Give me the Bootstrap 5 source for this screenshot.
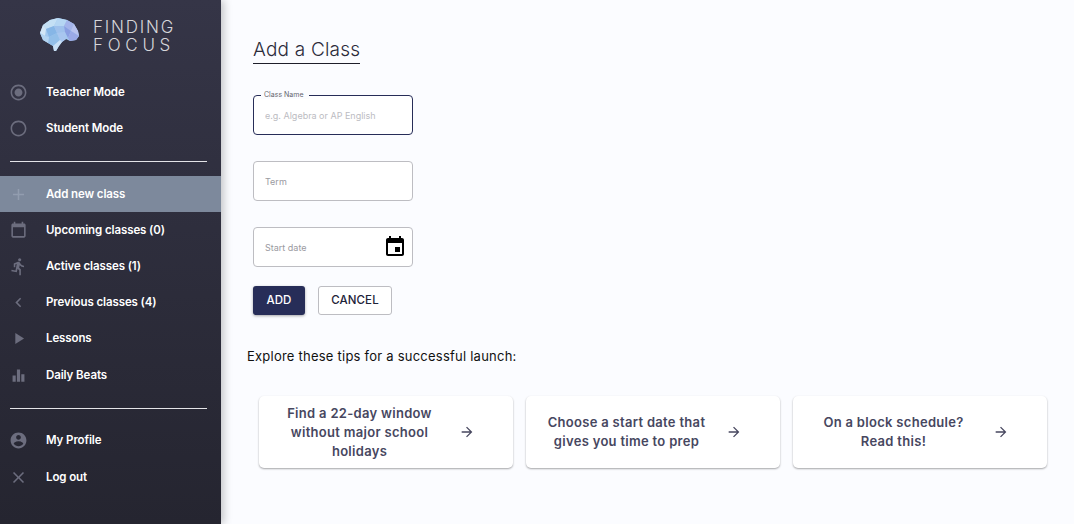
<!DOCTYPE html>
<html lang="en">
<head>
  <meta charset="UTF-8">
  <title>Finding Focus - Add a Class</title>
  <link href="https://cdn.jsdelivr.net/npm/bootstrap@5.3.2/dist/css/bootstrap.min.css" rel="stylesheet">
  <style>
    body {
      background-color: #fbfcff;
      font-family: Inter, "Liberation Sans", sans-serif;
      color: #111;
      height: 100vh;
      overflow: hidden;
    }

    .side-bar {
      width: 221px;
      height: 100vh;
      flex-shrink: 0;
      background: linear-gradient(180deg, #353547 0%, #252530 100%);
      box-shadow: 3px 0 8px rgba(0, 0, 0, .22);
    }

    .logo-area {
      height: 74px;
      padding: 18px 0 0 40px;
      gap: 14px;
    }

    .logo-text {
      color: #d6d6da;
      font-size: 17px;
      font-weight: 300;
      line-height: 18px;
    }

    .logo-top {
      display: block;
      letter-spacing: 1.8px;
    }

    .logo-bottom {
      display: block;
      letter-spacing: 4.7px;
    }

    .side-item {
      height: 36px;
      color: #fff;
      font-size: 11.5px;
      font-weight: 600;
      letter-spacing: -.1px;
      text-decoration: none;
      padding-left: 9px;
    }

    .side-item span {
      padding-top: 2px;
    }

    .side-item svg {
      width: 19px;
      height: 19px;
      fill: #6c6d7e;
      margin-right: 18px;
      flex-shrink: 0;
    }

    .side-item.is-active {
      background-color: #7d899c;
    }

    .side-item.is-active svg {
      fill: #929daf;
    }

    .side-item.is-late {
      margin-top: 1px;
    }

    .side-rule {
      border-top: 1px solid #e4e4e8;
      margin: 15px 14px 14px 10px;
    }

    .side-rule.is-tight {
      margin-bottom: 13px;
    }

    .main-area {
      padding: 38px 27px 0 26px;
    }

    .page-title {
      display: inline-block;
      font-size: 19px;
      font-weight: 300;
      line-height: 24px;
      letter-spacing: .2px;
      color: #2b2b3a;
      border-bottom: 1px solid #1e1e2a;
      padding-bottom: 1px;
      margin: 0 0 31px 6px;
    }

    .field-box {
      width: 160px;
      height: 40px;
      margin: 0 0 26px 6px;
    }

    .field-box .form-control {
      height: 40px;
      font-size: 9px;
      padding: 0 11px;
      border: 1px solid #bdbdc2;
      border-radius: 4px;
      background-color: #fff;
      box-shadow: none;
    }

    .field-box .form-control::placeholder {
      color: #9a9a9f;
    }

    .field-box.is-focus .form-control {
      border-color: #272d58;
    }

    .field-box.is-focus .form-control::placeholder {
      color: #bcbcc2;
    }

    .field-label {
      position: absolute;
      left: 8px;
      top: -5px;
      padding: 0 5px 0 3px;
      font-size: 7px;
      line-height: 9px;
      color: #66666e;
      background-color: #fbfcff;
    }

    .cal-icon {
      position: absolute;
      right: 6px;
      top: 8px;
      width: 24px;
      height: 24px;
    }

    .btn-row {
      margin: -7px 0 0 6px;
      gap: 13px;
    }

    .btn-add, .btn-cancel {
      height: 29px;
      font-size: 11.5px;
      font-weight: 500;
      letter-spacing: .1px;
      border-radius: 3px;
      padding: 0;
    }

    .btn-add {
      width: 52px;
      background-color: #272d58;
      border: 0;
      color: #fff;
      box-shadow: 0 1px 3px rgba(0, 0, 0, .35);
    }

    .btn-cancel {
      width: 74px;
      background-color: #fff;
      border: 1px solid #bdbdc2;
      color: #1e2238;
    }

    .tips-intro {
      font-size: 13px;
      line-height: 18px;
      letter-spacing: .23px;
      margin: 32px 0 31px;
      color: #111;
    }

    .tips-row {
      margin-left: 12px;
      gap: 13px;
    }

    .tip-box {
      flex: 1 1 0;
      height: 72px;
      background-color: #fff;
      border: 0;
      border-radius: 5px;
      box-shadow: 0 1px 2px rgba(0, 0, 0, .35);
      color: #47475f;
      font-size: 13px;
      font-weight: 600;
      line-height: 19px;
      letter-spacing: .3px;
      text-align: center;
      padding: 0 38px 0 15px;
      gap: 14px;
    }

    .tip-box span {
      flex: 1 1 0;
    }

    .tip-box svg {
      width: 16px;
      height: 16px;
      fill: #47475f;
      flex-shrink: 0;
    }
  </style>
</head>
<body>
  <div class="d-flex">
    <!-- sidebar -->
    <nav class="side-bar d-flex flex-column">
      <div class="logo-area d-flex">
        <svg width="39" height="34" viewBox="0 0 39 34" class="flex-shrink-0">
          <polygon points="0,15 3,7 10,2 18,0 27,2 34,6 38,13 39,18 36,22 30,23 26,21 22,24 19,28 16,33 14,33 13,28 8,25 3,22" fill="#a3c8ee"/>
          <polygon points="3,7 10,2 18,0 14,8 6,11" fill="#c4e0f5"/>
          <polygon points="18,0 27,2 24,8 14,8" fill="#b5d6f3"/>
          <polygon points="0,15 3,7 6,11 5,18" fill="#d2e6f6"/>
          <polygon points="6,11 14,8 17,15 9,19" fill="#86b6e6"/>
          <polygon points="14,8 24,8 25,14 17,15" fill="#9fc1ec"/>
          <polygon points="27,2 34,6 31,13 24,8" fill="#a4b4ea"/>
          <polygon points="24,8 31,13 28,20 25,14" fill="#8a9fe2"/>
          <polygon points="34,6 38,13 39,18 31,13" fill="#b8c2ee"/>
          <polygon points="31,13 39,18 36,22 30,23 28,20" fill="#9aa9e6"/>
          <polygon points="9,19 17,15 20,22 13,28 8,25" fill="#93bfe9"/>
          <polygon points="17,15 25,14 26,21 22,24 20,22" fill="#a8c6ef"/>
          <polygon points="13,28 20,22 22,24 19,28 16,33 14,33" fill="#c9e0f6"/>
          <polygon points="0,15 5,18 9,19 8,25 3,22" fill="#b3d4f1"/>
        </svg>
        <div class="logo-text"><span class="logo-top">FINDING</span><span class="logo-bottom">FOCUS</span></div>
      </div>

      <a href="#" class="side-item d-flex align-items-center">
        <svg viewBox="0 0 24 24"><path d="M12 7c-2.76 0-5 2.24-5 5s2.24 5 5 5 5-2.24 5-5-2.24-5-5-5zm0-5C6.48 2 2 6.48 2 12s4.48 10 10 10 10-4.48 10-10S17.52 2 12 2zm0 18c-4.42 0-8-3.58-8-8s3.58-8 8-8 8 3.58 8 8-3.58 8-8 8z"/></svg>
        <span>Teacher Mode</span>
      </a>
      <a href="#" class="side-item d-flex align-items-center">
        <svg viewBox="0 0 24 24"><path d="M12 2C6.48 2 2 6.48 2 12s4.48 10 10 10 10-4.48 10-10S17.52 2 12 2zm0 18c-4.42 0-8-3.58-8-8s3.58-8 8-8 8 3.58 8 8-3.58 8-8 8z"/></svg>
        <span>Student Mode</span>
      </a>

      <div class="side-rule"></div>

      <a href="#" class="side-item is-active d-flex align-items-center">
        <svg viewBox="0 0 24 24"><path d="M19 13h-6v6h-2v-6H5v-2h6V5h2v6h6v2z"/></svg>
        <span>Add new class</span>
      </a>
      <a href="#" class="side-item d-flex align-items-center">
        <svg viewBox="0 0 24 24"><path d="M19 3h-1V1h-2v2H8V1H6v2H5c-1.11 0-1.99.9-1.99 2L3 19c0 1.1.89 2 2 2h14c1.1 0 2-.9 2-2V5c0-1.1-.9-2-2-2zm0 16H5V8h14v11z"/></svg>
        <span>Upcoming classes (0)</span>
      </a>
      <a href="#" class="side-item d-flex align-items-center">
        <svg viewBox="0 0 24 24"><path d="M13.49 5.48c1.1 0 2-.9 2-2s-.9-2-2-2-2 .9-2 2 .9 2 2 2zm-3.6 13.9l1-4.4 2.1 2v6h2v-7.5l-2.1-2 .6-3c1.3 1.5 3.3 2.5 5.5 2.5v-2c-1.9 0-3.5-1-4.3-2.4l-1-1.6c-.4-.6-1-1-1.7-1-.3 0-.5.1-.8.1l-5.2 2.2v4.7h2v-3.4l1.8-.7-1.6 8.1-4.9-1-.4 2 7 1.4z"/></svg>
        <span>Active classes (1)</span>
      </a>
      <a href="#" class="side-item d-flex align-items-center">
        <svg viewBox="0 0 24 24"><path d="M15.41 7.41L14 6l-6 6 6 6 1.41-1.41L10.83 12z"/></svg>
        <span>Previous classes (4)</span>
      </a>
      <a href="#" class="side-item d-flex align-items-center">
        <svg viewBox="0 0 24 24"><path d="M8 5v14l11-7z"/></svg>
        <span>Lessons</span>
      </a>
      <a href="#" class="side-item is-late d-flex align-items-center">
        <svg viewBox="0 0 24 24"><path d="M4.5 12h4v8h-4zM10 4.500h4V20h-4zm5.500 6h4V20h-4z"/></svg>
        <span>Daily Beats</span>
      </a>

      <div class="side-rule is-tight"></div>

      <a href="#" class="side-item d-flex align-items-center">
        <svg viewBox="0 0 24 24"><path d="M12 2C6.48 2 2 6.48 2 12s4.48 10 10 10 10-4.48 10-10S17.52 2 12 2zm0 3c1.66 0 3 1.34 3 3s-1.34 3-3 3-3-1.34-3-3 1.34-3 3-3zm0 14.2c-2.5 0-4.71-1.28-6-3.22.03-1.99 4-3.08 6-3.08 1.99 0 5.97 1.09 6 3.08-1.29 1.94-3.5 3.22-6 3.22z"/></svg>
        <span>My Profile</span>
      </a>
      <a href="#" class="side-item is-late d-flex align-items-center">
        <svg viewBox="0 0 24 24"><path d="M19 6.41L17.59 5 12 10.59 6.41 5 5 6.41 10.59 12 5 17.59 6.41 19 12 13.41 17.59 19 19 17.59 13.41 12z"/></svg>
        <span>Log out</span>
      </a>
    </nav>

    <!-- main content -->
    <main class="main-area flex-grow-1">
      <h1 class="page-title">Add a Class</h1>

      <div class="field-box is-focus position-relative">
        <input type="text" class="form-control" placeholder="e.g. Algebra or AP English">
        <span class="field-label">Class Name</span>
      </div>
      <div class="field-box position-relative">
        <input type="text" class="form-control" placeholder="Term">
      </div>
      <div class="field-box position-relative">
        <input type="text" class="form-control" placeholder="Start date">
        <svg class="cal-icon" viewBox="0 0 24 24"><path d="M17 12h-5v5h5v-5zM16 1v2H8V1H6v2H5c-1.11 0-1.99.9-1.99 2L3 19c0 1.1.89 2 2 2h14c1.1 0 2-.9 2-2V5c0-1.1-.9-2-2-2h-1V1h-2zm3 18H5V8h14v11z"/></svg>
      </div>

      <div class="btn-row d-flex">
        <button type="button" class="btn btn-add">ADD</button>
        <button type="button" class="btn btn-cancel">CANCEL</button>
      </div>

      <p class="tips-intro">Explore these tips for a successful launch:</p>

      <div class="tips-row d-flex">
        <div class="tip-box card flex-row align-items-center">
          <span>Find a 22-day window without major school holidays</span>
          <svg viewBox="0 0 24 24"><path d="M12 4l-1.41 1.41L16.17 11H4v2h12.17l-5.58 5.59L12 20l8-8z"/></svg>
        </div>
        <div class="tip-box card flex-row align-items-center">
          <span>Choose a start date that gives you time to prep</span>
          <svg viewBox="0 0 24 24"><path d="M12 4l-1.41 1.41L16.17 11H4v2h12.17l-5.58 5.59L12 20l8-8z"/></svg>
        </div>
        <div class="tip-box card flex-row align-items-center">
          <span>On a block schedule?<br>Read this!</span>
          <svg viewBox="0 0 24 24"><path d="M12 4l-1.41 1.41L16.17 11H4v2h12.17l-5.58 5.59L12 20l8-8z"/></svg>
        </div>
      </div>
    </main>
  </div>

  <script src="https://cdn.jsdelivr.net/npm/bootstrap@5.3.2/dist/js/bootstrap.bundle.min.js"></script>
</body>
</html>
